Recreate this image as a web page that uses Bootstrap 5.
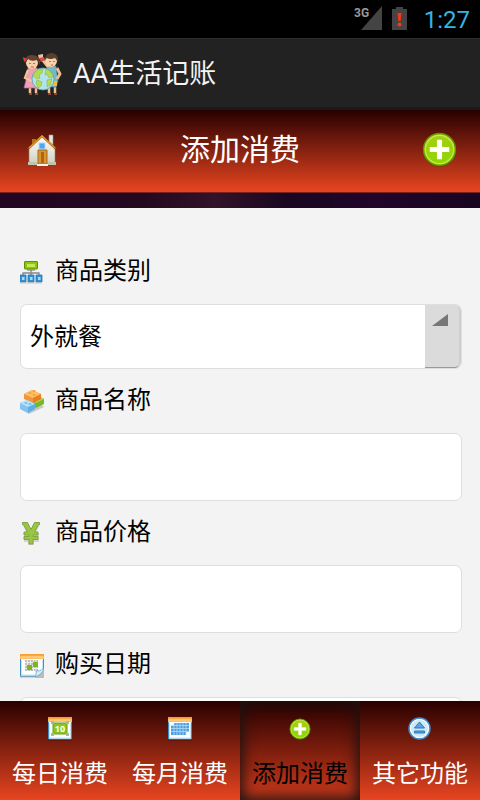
<!DOCTYPE html>
<html lang="zh-CN">
<head>
<meta charset="utf-8">
<meta name="viewport" content="width=device-width, initial-scale=1">
<title>AA生活记账</title>
<link href="https://cdn.jsdelivr.net/npm/bootstrap@5.3.0/dist/css/bootstrap.min.css" rel="stylesheet">
<style>
  body { font-family: Roboto, "Noto Sans CJK SC", sans-serif; background: #f3f3f3; color: #000; }
  .status-bar { height: 38px; background: #000; padding-right: 10px; }
  .clock { color: #33b5e5; font-size: 24px; line-height: 40px; margin-left: 14px; }
  .app-bar { height: 72px; background: #222; border-top: 1px solid #2d2d2d; border-bottom: 3px solid #1a1a1a; padding: 2px 20px 0; gap: 9px; }
  .app-name { font-size: 27px; line-height: 40px; color: #f3f3f3; }
  .fire { background: linear-gradient(#280000, #e84520); }
  .page-head { height: 83px; border-bottom: 1px solid #7b2220; padding: 0 22px 2px; }
  .page-head h1 { font-size: 30px; line-height: 40px; font-weight: 400; }
  .strip { height: 15px; background: linear-gradient(90deg, #220622, #24091f 30%, #321329 45%, #190721 60%, #21052a 78%, #190520); }
  .form-area { padding: 32px 18px 20px 20px; min-height: 0; scrollbar-width: none; }
  .form-area::-webkit-scrollbar { display: none; }
  .field-label { height: 64px; padding-bottom: 2px; font-size: 24px; line-height: 32px; gap: 11px; }
  .field-label svg { margin-top: 4px; }
  .form-area .field { height: 68px; border: 1px solid #dedede; border-radius: 7px; background: #fff; color: #000; font-size: 24px; padding: 0 9px; }
  .form-area select.field { height: 65px; appearance: none; -webkit-appearance: none; }
  .drop-mark { top: 1px; right: 1px; bottom: 1px; width: 36px; background: #dbdbdb; border-radius: 0 6px 6px 0; border-right: 2px solid #cecece; border-bottom: 1px solid #999; pointer-events: none; }
  .drop-mark svg { margin: 9px 0 0 7px; }
  .tab { height: 99px; padding-top: 16px; font-size: 24px; line-height: 32px; gap: 17px; color: #fff; }
  .tab.active { color: #000; background: linear-gradient(#280000, #d23b1c); box-shadow: inset 0 0 14px 3px #1c1210; }
</style>
<script src="https://cdn.jsdelivr.net/npm/bootstrap@5.3.0/dist/js/bootstrap.bundle.min.js"></script>
</head>
<body>
<svg class="position-absolute" width="0" height="0" aria-hidden="true">
  <defs>
    <linearGradient id="green" x2="0" y2="1"><stop stop-color="#a5cf12"/><stop offset="1" stop-color="#8fd600"/></linearGradient>
    <linearGradient id="wall" x2="0" y2="1"><stop stop-color="#fff"/><stop offset="1" stop-color="#cfcfbd"/></linearGradient>
    <linearGradient id="orange" x2="0" y2="1"><stop stop-color="#f79a2a"/><stop offset="1" stop-color="#ffc36b"/></linearGradient>
    <symbol id="plus" viewBox="0 0 34 34">
      <circle cx="17" cy="17.8" r="16" fill="#2c5200" opacity=".6"/>
      <circle cx="17" cy="17" r="15.5" fill="url(#green)" stroke="#5f9400" stroke-width="1.4"/>
      <circle cx="17" cy="17" r="13.8" fill="none" stroke="#d3ec62" stroke-width="1.2" opacity=".8"/>
      <path d="M15 8h4v7h7v4h-7v7h-4v-7H8v-4h7z" fill="#fff" stroke="#fff" stroke-linejoin="round"/>
    </symbol>
    <symbol id="calendar" viewBox="0 0 24 24">
      <path d="M0 22h24v1.500H0z" fill="#000" opacity=".25"/>
      <path d="M.5 1h23v21H.500z" fill="#fff" stroke="#3a91ca"/>
      <path d="M1.500 6v15h21V6" fill="none" stroke="#c4e5f7"/>
      <path d="M0 0h24v5H0z" fill="url(#orange)"/><path d="M1 3h22" stroke="#ffe0a4" stroke-width="1"/>
    </symbol>
  </defs>
</svg>

<div class="d-flex flex-column vh-100">
  <div class="status-bar d-flex justify-content-end flex-shrink-0" role="status">
    <svg width="56" height="38" viewBox="0 0 56 38" aria-label="3G，电量低">
      <path d="M28 6v24H7z" fill="#444"/>
      <text x="0" y="17" font-family="Roboto, sans-serif" font-size="12" font-weight="700" fill="#999" stroke="#000" stroke-width="2" paint-order="stroke">3G</text>
      <path d="M38 9h4V7h7v2h4v21H38z" fill="#444"/>
      <path d="M43.500 13h4l-1 8h-2z" fill="#ff3510"/><circle cx="45.500" cy="24.500" r="2" fill="#ff3510"/>
    </svg>
    <span class="clock">1:27</span>
  </div>

  <header class="app-bar d-flex align-items-center flex-shrink-0">
    <svg width="44" height="44" viewBox="0 0 44 44" aria-hidden="true">
      <path d="M10 33v8M16 33v8" stroke="#f2bd91" stroke-width="2.500"/><path d="M9 42h3M15 42h3M28 42h3M34 42h3" stroke="#8b4934" stroke-width="2"/>
      <path d="M29 32v9M35 32v9" stroke="#f2bd91" stroke-width="2.500"/>
      <path d="M8 16h9l4 8-3 12H4q3-10 4-20z" fill="#eda0b6" stroke="#b5657e" stroke-width=".7"/>
      <path d="M8 18l-3 8 7 3" fill="none" stroke="#f5c69c" stroke-width="2.300"/>
      <path d="M27 14h9l2 15-2 6h-9z" fill="#75b8c9" stroke="#467c8c" stroke-width=".7"/><path d="M29 29h8v5h-8z" fill="#edbd36"/>
      <path d="M37 16l3 6-3 5M28 15l-7-9" fill="none" stroke="#f2bd91" stroke-width="2.800"/>
      <path d="M18 3l5-1v4l-4 1z" fill="#f4c2a2"/><path d="M19 6l5-1 1 3-4 2z" fill="#d84d43"/>
      <circle cx="12" cy="11" r="6" fill="#f8d0aa"/><path d="M5 12Q4 3 12 3q9 0 8 10l-3-5q-6 2-9-1z" fill="#654131"/>
      <circle cx="31" cy="9" r="6" fill="#f8d0aa"/><path d="M25 8q0-7 7-7 7 1 6 9l-3-4q-5 2-8 0z" fill="#59402e"/>
      <path d="M3 5l4 2-3 3z" fill="#e8443e"/>
      <path d="M10 11v1M14 11v1M30 9v1M34 9v1" stroke="#4d2d24"/><path d="M11 15h3M31 13h2" stroke="#d15b4c"/>
      <circle cx="23" cy="27" r="11" fill="#b2e2ec" stroke="#5a9fb2" stroke-width=".8"/>
      <path d="M15 20q3-4 8-3l-1 4-3 2 1 3-3 1-4-3zM26 17q6 2 7 8l-4 1-2-4-2 1zM17 28l5 2-1 4-3 2-2-5zM27 28l5-1-2 6-3 2z" fill="#b5db50" stroke="#7eb145" stroke-width=".5"/>
    </svg>
    <span class="app-name">AA生活记账</span>
  </header>

  <div class="page-head fire d-flex align-items-center justify-content-between flex-shrink-0">
    <button type="button" class="btn p-0 border-0 lh-1" aria-label="主页">
      <svg width="36" height="36" viewBox="0 0 36 36">
        <path d="M27 3h4v12h-4z" fill="#e6e6df" stroke="#92917e" stroke-width=".6"/>
        <path d="M10 7h4v7h-4z" fill="#b87412"/>
        <path d="M7 16L20 4l13 12v16H7z" fill="url(#wall)" stroke="#8d8068" stroke-width=".6"/>
        <path d="M6 17L20 4l14 13" fill="none" stroke="#8c4d08" stroke-width="2"/><path d="M7 16L20 4l13 12" fill="none" stroke="#dc9a29" stroke-width="1.500"/>
        <rect x="17" y="11" width="6" height="6" fill="#4ca7f1" stroke="#b2d9f6"/>
        <path d="M16 18h9v14h-9z" fill="#d8942e" stroke="#aa6617"/><path d="M19 20h3v11h-3z" fill="#aa6517"/>
        <path d="M6 30h9v3H6zM26 30h8v3h-8z" fill="#c1c4ac"/><path d="M15 32h11v2H15z" fill="#f1f1e8"/>
      </svg>
    </button>
    <h1 class="m-0 text-white">添加消费</h1>
    <button type="button" class="btn p-0 border-0 lh-1" aria-label="添加"><svg width="36" height="36"><use href="#plus" x="0" y="0" width="35" height="35"/></svg></button>
  </div>
  <div class="strip flex-shrink-0"></div>

  <form class="form-area flex-grow-1 overflow-auto">
    <label class="field-label d-flex align-items-center" for="category">
      <svg width="24" height="24" viewBox="0 0 24 24" aria-hidden="true">
        <path d="M11 9v4M3 15v-3h16v3M11 12v3" fill="none" stroke="#888" stroke-width="1.300"/>
        <rect x="4.500" y=".5" width="13" height="7.500" rx=".5" fill="#8cc70c" stroke="#5d8f08"/><path d="M7 3h8v3H7z" fill="#c4e857"/><path d="M7 9h8" stroke="#777"/>
        <path d="M0 14h6v7H0zM8 14h6v7H8zM16 14h6v7h-6z" fill="#3491d2" stroke="#2477b7" stroke-width=".8"/>
        <path d="M2 16h2.500v3H2zM10 16h2.500v3H10zM18 16h2.500v3H18z" fill="#a6dbfb"/>
        <path d="M0 22h22" stroke="#c5c5c5"/>
      </svg>商品类别
    </label>
    <div class="position-relative">
      <select class="field w-100 d-block" id="category"><option>外就餐</option></select>
      <span class="drop-mark position-absolute d-flex align-items-start"><svg width="16" height="12" viewBox="0 0 16 12" aria-hidden="true"><path d="M16 0v12H0z" fill="#777"/></svg></span>
    </div>

    <label class="field-label d-flex align-items-center" for="goods">
      <svg width="24" height="24" viewBox="0 0 24 24" aria-hidden="true">
        <path d="M2 20l7 4 15-7-3-3z" fill="#777" opacity=".35"/>
        <path d="M12 10l8-3 4 2v5l-8 4-4-3z" fill="#76b82a"/><path d="M12 11l4 2 8-4-4-2z" fill="#a5da59"/>
        <path d="M4 4l8-4 9 4v5l-8 4-9-4z" fill="#f3953a"/><path d="M4 4l8-4 9 4-8 4z" fill="#ffc065"/><path d="M13 8l8-4v5l-8 4z" fill="#e87e21"/>
        <path d="M8 3l2-1 2 1-2 1zM12 1l2-1 2 1-2 1zM12 5l2-1 2 1-2 1z" fill="#f39a36"/>
        <path d="M0 13l7-3 8 4v5l-7 4-8-4z" fill="#84c3f0"/><path d="M0 13l7-3 8 4-7 3z" fill="#b6e2fb"/><path d="M8 17l7-3v5l-7 4z" fill="#5fade2"/>
        <path d="M4 13l2-1 2 1-2 1zM8 14l2-1 2 1-2 1z" fill="#70b9eb"/>
      </svg>商品名称
    </label>
    <input class="field w-100 d-block" id="goods" type="text">

    <label class="field-label d-flex align-items-center" for="price">
      <svg width="24" height="24" viewBox="0 0 24 24" aria-hidden="true">
        <path d="M2 2h6l3 6 3-6h6l-4 9h3v9h-5v3H8v-3H4v-9h3z" fill="#777" opacity=".25"/>
        <path d="M2.500.5h5L11 7.500 14.500.5h5v2h-1L14.500 10h3.500v3h-5v1.500h5v3h-5V22H9v-4.500H4v-3h5V13H4v-3h3.500L3.500 2.500h-1z" fill="#9bc641" stroke="#7fa544"/>
      </svg>商品价格
    </label>
    <input class="field w-100 d-block" id="price" type="text" inputmode="decimal">

    <label class="field-label d-flex align-items-center" for="date">
      <svg width="24" height="24" viewBox="0 0 24 24" aria-hidden="true">
        <use href="#calendar" width="24" height="24"/>
        <path d="M5 6h13v11H5z" fill="#bdbdbd"/><path d="M5 8.500h13M5 11.500h13M5 14.500h13M7.500 6v11M10.500 6v11M13.500 6v11M16 6v11" stroke="#eee"/>
        <path d="M13 8h5v5h-5zM7 11h5v5H7z" fill="#7cb516"/>
        <path d="M15 24l9-9v9z" fill="#bbb"/><path d="M15 23q2-3 1-6 4 1 8-3-1 6-9 9z" fill="#d9effa" stroke="#66a9d4" stroke-width=".8"/>
      </svg>购买日期
    </label>
    <input class="field w-100 d-block" id="date" type="text">
  </form>

  <nav class="fire flex-shrink-0" aria-label="功能">
    <div class="row g-0">
      <a class="tab col-3 d-flex flex-column align-items-center text-decoration-none" href="#daily">
        <svg width="24" height="24" viewBox="0 0 24 24" aria-hidden="true"><use href="#calendar" width="24" height="24"/><path d="M5 6h14v11H5z" fill="#8bc520" stroke="#6b9f16"/><path d="M3 4h3v3H3zM18 4h3v3h-3zM3 16h3v3H3zM18 16h3v3h-3z" fill="#a9b98b"/><text x="12" y="15" text-anchor="middle" font-family="Open Sans, sans-serif" font-size="9" font-weight="700" fill="#fff">10</text></svg>
        <span>每日消费</span>
      </a>
      <a class="tab col-3 d-flex flex-column align-items-center text-decoration-none" href="#monthly">
        <svg width="24" height="24" viewBox="0 0 24 24" aria-hidden="true"><use href="#calendar" width="24" height="24"/><path d="M6 6h15v9h-3v3H3V9h3z" fill="#4d9fe0"/><path d="M3 8.500h18M3 11.500h18M3 14.500h18M6 6v12M9 6v12M12 6v12M15 6v12M18 6v12" stroke="#b5dbf5" stroke-width=".8"/></svg>
        <span>每月消费</span>
      </a>
      <a class="tab active col-3 d-flex flex-column align-items-center text-decoration-none" href="#add" aria-current="page">
        <svg width="24" height="24" viewBox="0 0 24 24" aria-hidden="true"><use href="#plus" x="1" y="1" width="22" height="22"/></svg>
        <span>添加消费</span>
      </a>
      <a class="tab col-3 d-flex flex-column align-items-center text-decoration-none" href="#more">
        <svg width="24" height="24" viewBox="0 0 24 24" aria-hidden="true"><circle cx="11.500" cy="11.500" r="10.500" fill="#cce9fa" stroke="#4788c4" stroke-width="1.500"/><circle cx="11.500" cy="11.500" r="9" fill="none" stroke="#fff"/><path d="M6.500 11l5-6 5 6z" fill="#5ba5dc" stroke="#2c79bc"/><path d="M6.500 14h10v2h-10z" fill="#5ba5dc" stroke="#2c79bc"/></svg>
        <span>其它功能</span>
      </a>
    </div>
  </nav>
</div>
</body>
</html>
